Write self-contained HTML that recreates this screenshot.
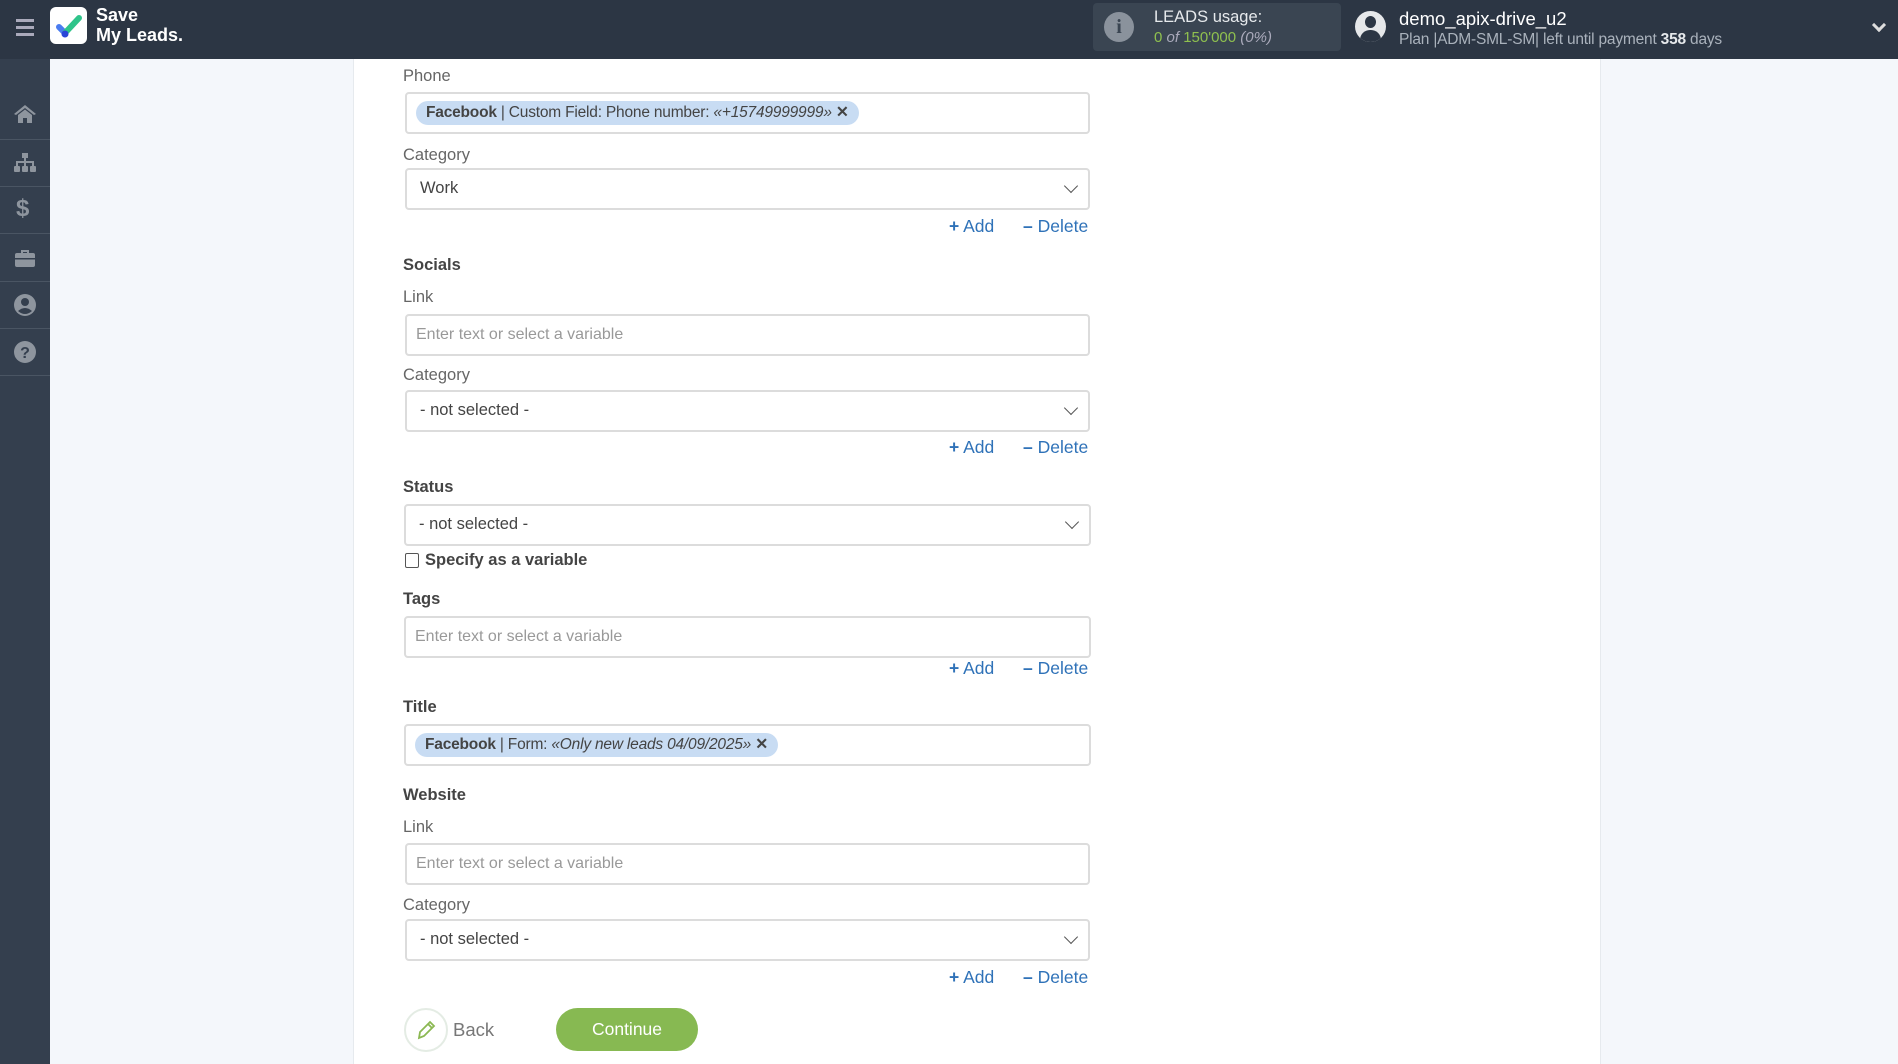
<!DOCTYPE html>
<html><head><meta charset="utf-8"><style>
*{box-sizing:border-box;margin:0;padding:0}
body{width:1898px;height:1064px;overflow:hidden;background:#f4f7fb;font-family:"Liberation Sans",sans-serif;position:relative;color:#444}
.hdr{position:absolute;left:0;top:0;width:1898px;height:59px;background:#2c3644}
.side{position:absolute;left:0;top:59px;width:50px;height:1005px;background:#343f4e}
.sep{position:absolute;left:0;width:50px;height:1px;background:#4a5563}
.ic{position:absolute;left:13px;width:24px;height:24px}
.card{position:absolute;left:353px;top:59px;width:1248px;height:1005px;background:#fff;border-left:1px solid #e6eaee;border-right:1px solid #e6eaee}
.a{position:absolute}
.lbl{position:absolute;left:403px;font-size:16.5px;color:#666}
.blbl{position:absolute;left:403px;font-size:16.5px;color:#444;font-weight:bold}
.inp{position:absolute;left:405px;width:685px;height:42px;border:2px solid #dcdcdc;border-radius:4px;background:#fff}
.ph{position:absolute;left:9px;top:10px;font-size:16px;color:#999}
.sel .v{position:absolute;left:13px;top:9px;font-size:16.5px;color:#444}
.chev{position:absolute;right:12px;top:11px;width:10px;height:10px;border-right:1.6px solid #555;border-bottom:1.6px solid #555;transform:rotate(45deg)}
.tag{position:absolute;left:9px;top:7px;height:24px;background:#c8dcf3;border-radius:12px;padding:0 10px;font-size:15.5px;line-height:24px;color:#444;white-space:nowrap;letter-spacing:-0.2px}
.ad{position:absolute;font-size:17.5px;color:#2f72b8;white-space:nowrap}
</style></head><body>
<div class="hdr">
 <div class="a" style="left:16px;top:19px;width:18px;height:3px;background:#aab;box-shadow:0 7px 0 #aab,0 14px 0 #aab"></div>
 <div class="a" style="left:50px;top:7px;width:37px;height:37px;background:#fff;border-radius:6px">
  <svg width="37" height="37" viewBox="0 0 37 37"><path d="M9 20 L15 26" stroke="#4a7cf0" stroke-width="6" stroke-linecap="round"/><path d="M15 26 L29 11" stroke="#2fc48a" stroke-width="6" stroke-linecap="round"/><circle cx="15" cy="27" r="3.5" fill="#2a45d8"/></svg>
 </div>
 <div class="a" style="left:96px;top:5px;font-weight:bold;font-size:18px;line-height:20px;color:#fff">Save<br>My Leads.</div>
 <div class="a" style="left:1093px;top:3px;width:248px;height:48px;background:#3a4552;border-radius:4px">
  <div class="a" style="left:11px;top:9px;width:30px;height:30px;border-radius:50%;background:#8a929c;color:#3a4552;font-weight:bold;font-size:20px;text-align:center;line-height:30px;font-family:'Liberation Serif',serif">i</div>
  <div class="a" style="left:61px;top:5px;font-size:16.5px;color:#e6e9ec">LEADS usage:</div>
  <div class="a" style="left:61px;top:26px;font-size:15px;color:#8fc04f">0 <i style="color:#aab">of</i> 150'000 <i style="color:#aab">(0%)</i></div>
 </div>
 <div class="a" style="left:1355px;top:11px;width:31px;height:31px;border-radius:50%;background:#e6e8ea;overflow:hidden">
  <div class="a" style="left:10px;top:5px;width:11px;height:12px;border-radius:50%;background:#2c3644"></div>
  <div class="a" style="left:5px;top:19px;width:21px;height:14px;border-radius:10px 10px 0 0;background:#2c3644"></div>
 </div>
 <div class="a" style="left:1399px;top:8px;font-size:18.5px;color:#fff">demo_apix-drive_u2</div>
 <div class="a" style="left:1399px;top:31px;font-size:15.5px;color:#aab2bc;letter-spacing:-0.2px">Plan |ADM-SML-SM| left until payment <b style="color:#e6e9ec">358</b> days</div>
 <div class="a" style="left:1874px;top:20px;width:10px;height:10px;border-right:3px solid #ddd;border-bottom:3px solid #ddd;transform:rotate(45deg)"></div>
</div>
<div class="side">
 <div class="sep" style="top:80px"></div><div class="sep" style="top:127px"></div><div class="sep" style="top:174px"></div><div class="sep" style="top:222px"></div><div class="sep" style="top:269px"></div><div class="sep" style="top:316px"></div>
 <svg class="ic" style="top:43px" viewBox="0 0 24 24"><path d="M12 3 L1 12 L3 13 L12 6 L21 13 L23 12 Z M5 13 V21 H10 V16 H14 V21 H19 V13 L12 7.5Z" fill="#8e959e"/></svg>
 <svg class="ic" style="top:92px" viewBox="0 0 24 24" fill="#8e959e"><rect x="9" y="2" width="6" height="5"/><rect x="11" y="7" width="2" height="4"/><rect x="3" y="10" width="18" height="2"/><rect x="3" y="10" width="2" height="5"/><rect x="11" y="10" width="2" height="5"/><rect x="19" y="10" width="2" height="5"/><rect x="1" y="15" width="6" height="6" rx="1"/><rect x="9" y="15" width="6" height="6" rx="1"/><rect x="17" y="15" width="6" height="6" rx="1"/></svg>
 <div class="a" style="left:16px;top:136px;font-size:24px;font-weight:bold;color:#8e959e">$</div>
 <svg class="ic" style="top:187px" viewBox="0 0 24 24" fill="#8e959e"><path d="M8 4 H16 V7 H14 V6 H10 V7 H8Z"/><rect x="2" y="7" width="20" height="14" rx="2"/><rect x="2" y="12" width="20" height="1.5" fill="#343f4e"/></svg>
 <svg class="ic" style="top:234px" viewBox="0 0 24 24"><circle cx="12" cy="12" r="11" fill="#8e959e"/><circle cx="12" cy="9" r="4" fill="#343f4e"/><path d="M5 18 Q12 12 19 18 Q12 24 5 18Z" fill="#343f4e"/></svg>
 <svg class="ic" style="top:281px" viewBox="0 0 24 24"><circle cx="12" cy="12" r="11" fill="#8e959e"/><text x="12" y="18" text-anchor="middle" font-size="16" font-weight="bold" font-family="Liberation Sans" fill="#343f4e">?</text></svg>
</div>
<div class="card"></div>

<div class="lbl" style="top:67px">Phone</div>
<div class="inp" style="top:92px"><div class="tag"><b>Facebook</b> | Custom Field: Phone number: <i>«+15749999999»</i> <b>✕</b></div></div>
<div class="lbl" style="top:146px">Category</div>
<div class="inp sel" style="top:168px"><div class="v">Work</div><div class="chev"></div></div>
<div class="ad" style="left:949px;top:216px"><b>+</b> Add</div><div class="ad" style="left:1023px;top:216px"><b>–</b> Delete</div>

<div class="blbl" style="top:256px">Socials</div>
<div class="lbl" style="top:288px">Link</div>
<div class="inp" style="top:314px"><div class="ph">Enter text or select a variable</div></div>
<div class="lbl" style="top:366px">Category</div>
<div class="inp sel" style="top:390px"><div class="v">- not selected -</div><div class="chev"></div></div>
<div class="ad" style="left:949px;top:437px"><b>+</b> Add</div><div class="ad" style="left:1023px;top:437px"><b>–</b> Delete</div>

<div class="blbl" style="top:478px">Status</div>
<div class="inp sel" style="top:504px;left:404px;width:687px"><div class="v">- not selected -</div><div class="chev"></div></div>
<div class="a" style="left:405px;top:553px;width:14px;height:15px;border:1.5px solid #555;border-radius:2px;background:#fff"></div>
<div class="a" style="left:425px;top:551px;font-size:16.5px;color:#444;font-weight:bold">Specify as a variable</div>
<div class="blbl" style="top:590px">Tags</div>
<div class="inp" style="top:616px;left:404px;width:687px"><div class="ph">Enter text or select a variable</div></div>
<div class="ad" style="left:949px;top:658px"><b>+</b> Add</div><div class="ad" style="left:1023px;top:658px"><b>–</b> Delete</div>

<div class="blbl" style="top:698px">Title</div>
<div class="inp" style="top:724px;left:404px;width:687px"><div class="tag"><b>Facebook</b> | Form: <i>«Only new leads 04/09/2025»</i> <b>✕</b></div></div>

<div class="blbl" style="top:786px">Website</div>
<div class="lbl" style="top:818px">Link</div>
<div class="inp" style="top:843px"><div class="ph">Enter text or select a variable</div></div>
<div class="lbl" style="top:896px">Category</div>
<div class="inp sel" style="top:919px"><div class="v">- not selected -</div><div class="chev"></div></div>
<div class="ad" style="left:949px;top:967px"><b>+</b> Add</div><div class="ad" style="left:1023px;top:967px"><b>–</b> Delete</div>

<div class="a" style="left:404px;top:1008px;width:44px;height:44px;border:2px solid #e4ece4;border-radius:50%">
 <svg width="40" height="40" viewBox="0 0 40 40"><path d="M13 28 L14 22 L24 12 L28 16 L18 26 Z M22 14 L26 18" fill="none" stroke="#8bb852" stroke-width="1.8"/></svg>
</div>
<div class="a" style="left:453px;top:1019px;font-size:18.5px;color:#777">Back</div>
<div class="a" style="left:556px;top:1008px;width:142px;height:43px;border-radius:22px;background:#87b952;color:#fff;font-size:17.5px;text-align:center;line-height:43px">Continue</div>
</body></html>
